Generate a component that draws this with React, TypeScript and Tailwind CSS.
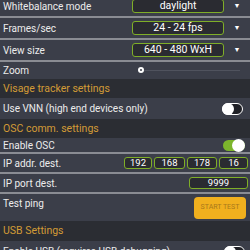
import React from "react";

const rowBg = "bg-[#3b3e49]";

function Divider() {
  return <div className="h-[2px] bg-[#8a8c93]" />;
}

function Header({ title, h }: { title: string; h: string }) {
  return (
    <div className={`flex items-center px-[3px] bg-[#2b2d33] ${h}`}>
      <span className="text-[10.5px] text-[#d29b36]">{title}</span>
    </div>
  );
}

function Select({ value }: { value: string }) {
  return (
    <div className="flex items-center">
      <div className="w-[92px] h-[14px] rounded-[3px] border-[1.5px] border-[#7fae28] bg-[#2a2b31] flex items-center justify-center text-[10.5px] leading-none text-white">
        {value}
      </div>
      <span className="w-[26px] text-center text-[7px] text-white">▼</span>
    </div>
  );
}

function Toggle({ on }: { on: boolean }) {
  return on ? (
    <div className="w-[22px] h-[11px] rounded-full bg-[#7cb52c] relative">
      <div className="absolute right-0 top-[-1px] w-[13px] h-[13px] rounded-full bg-white" />
    </div>
  ) : (
    <div className="w-[21px] h-[12px] rounded-full bg-[#1f2026] border border-white relative">
      <div className="absolute left-[-1px] top-[-1px] w-[12px] h-[12px] rounded-full bg-white" />
    </div>
  );
}

function Box({ v, w }: { v: string; w: string }) {
  return (
    <div className={`${w} h-[12px] rounded-[3px] border-[1.5px] border-[#7fae28] bg-[#2a2b31] flex items-center justify-center text-[9.5px] leading-none text-white`}>
      {v}
    </div>
  );
}

export default function App() {
  return (
    <div className="w-[250px] h-[250px] overflow-hidden bg-[#3b3e49] font-['Roboto',sans-serif] text-[10px] text-[#ececec]">
      <div className="-mt-[4px]">
        <div className={`flex items-center justify-between pl-[3px] h-[20px] ${rowBg}`}>
          <span>Whitebalance mode</span>
          <Select value="daylight" />
        </div>
        <Divider />
        <div className="flex items-center justify-between pl-[3px] h-[20px]">
          <span>Frames/sec</span>
          <Select value="24 - 24 fps" />
        </div>
        <Divider />
        <div className="flex items-center justify-between pl-[3px] h-[20px]">
          <span>View size</span>
          <Select value="640 - 480 WxH" />
        </div>
        <Divider />
        <div className="flex items-center pl-[3px] h-[17px]">
          <span>Zoom</span>
          <div className="relative ml-[112px] flex-1 mr-[10px] h-[6px] -mt-[2px]">
            <div className="absolute left-[2px] right-0 top-[3px] h-[1px] bg-[#50535e]" />
            <div className="absolute left-[-3px] top-0 w-[6px] h-[6px] rounded-full bg-white flex items-center justify-center">
              <div className="w-[2px] h-[2px] rounded-full bg-[#3b3e49]" />
            </div>
          </div>
        </div>
      </div>
      <Header title="Visage tracker settings" h="h-[19px]" />
      <div className="flex items-center justify-between pl-[3px] pr-[7px] h-[21px]">
        <span>Use VNN (high end devices only)</span>
        <Toggle on={false} />
      </div>
      <Header title="OSC comm. settings" h="h-[19px]" />
      <div className="flex items-center justify-between pl-[3px] pr-[5px] h-[14px]">
        <span>Enable OSC</span>
        <Toggle on />
      </div>
      <Divider />
      <div className="flex items-center justify-between pl-[3px] pr-[2px] h-[18px]">
        <span>IP addr. dest.</span>
        <div className="flex gap-[2px]">
          <Box v="192" w="w-[28px]" />
          <Box v="168" w="w-[31px]" />
          <Box v="178" w="w-[30px]" />
          <Box v="16" w="w-[29px]" />
        </div>
      </div>
      <Divider />
      <div className="flex items-center justify-between pl-[3px] pr-[2px] h-[18px]">
        <span>IP port dest.</span>
        <Box v="9999" w="w-[59px]" />
      </div>
      <Divider />
      <div className="flex items-center justify-between pl-[3px] pr-[4px] h-[27px]">
        <span className="-mt-[8px]">Test ping</span>
        <button className="w-[52px] h-[22px] rounded-[4px] bg-[#f1b01e] text-[7px] text-[#a9781c]">
          START TEST
        </button>
      </div>
      <Header title="USB Settings" h="h-[20px]" />
      <div className="flex items-center justify-between pl-[3px] pr-[5px] h-[21px]">
        <span>Enable USB (requires USB debugging)</span>
        <Toggle on={false} />
      </div>
    </div>
  );
}
